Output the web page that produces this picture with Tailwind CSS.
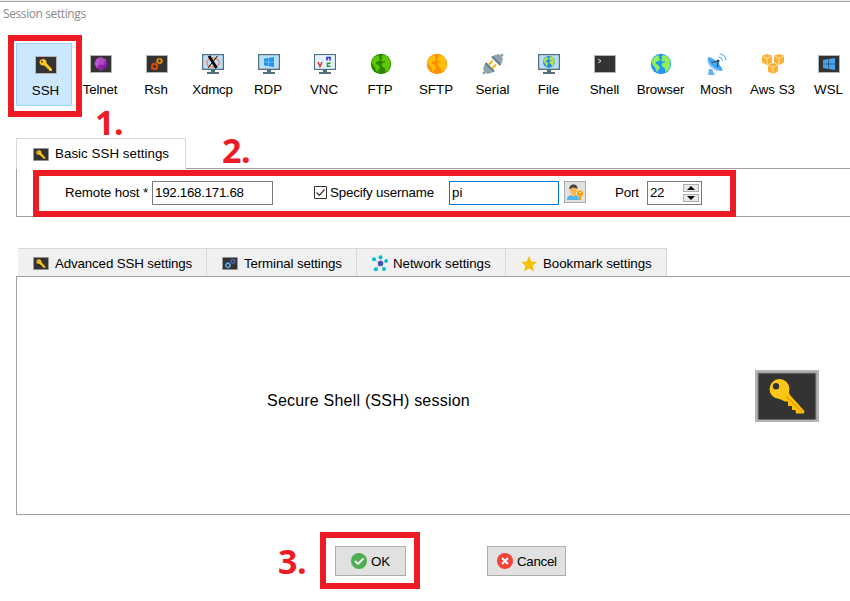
<!DOCTYPE html>
<html lang="en">
<head>
    <meta charset="UTF-8">
    <meta name="viewport" content="width=device-width, initial-scale=1.0">
    <title>Session settings</title>
    <script src="https://cdn.jsdelivr.net/npm/@tailwindcss/browser@4"></script>
</head>
<body class="relative w-[850px] h-[601px] overflow-hidden bg-white flex flex-col text-black font-['Liberation_Sans',Arial,sans-serif] text-[13.33px] leading-4 whitespace-nowrap">

<!-- Shared icons -->
<svg class="hidden">
    <symbol id="frame" viewBox="0 0 22 18">
        <path fill="#b4b4b4" d="M0 0h22v18H0z"/>
        <path fill="#333" d="M1 1h20v16H1z"/>
    </symbol>
    <symbol id="key" viewBox="0 0 64 52">
        <path fill="#b4b4b4" d="M0 0h64v52H0z"/>
        <path fill="#8c8c8c" d="M2.500 2.500h59v47h-59z"/>
        <path fill="#333" d="M3.500 3.500h57v46h-57z"/>
        <path fill="#ffc107" d="M33 20.500l2 4.500 14 15.500c.6 1 .5 2-.5 3H41l-.5-3.500h-3.500v-4h-4v-4.500h-3L24.500 29z"/>
        <path fill="#ffc61a" fill-rule="evenodd" d="M24.500 9a10 10 0 1 1 0 20 10 10 0 0 1 0-20zm-3.500 4a3.200 3.200 0 1 0 0 6.400 3.200 3.200 0 0 0 0-6.400z"/>
        <path fill="none" stroke="#e0a200" stroke-width="1.300" d="M31.500 26.500l16 16"/>
    </symbol>
    <symbol id="smallkey" viewBox="0 0 22 18">
        <path fill="#b4b4b4" d="M0 0h22v18H0z"/>
        <path fill="#333" d="M1 1h20v16H1z"/>
        <path fill="#ffc61a" fill-rule="evenodd" d="M8 3c2.500 0 4 2 3.600 4.200L17 13v2h-2.500l-.7-1.500-1.300-.5-.6-1.500-1.300-.5L9 9.300C6.500 10 4.500 8.500 4.500 6.300 4.500 4.500 6 3 8 3zM7 4.800a.9.900 0 1 0 0 1.800.9.900 0 0 0 0-1.800z"/>
    </symbol>
    <symbol id="monitor" viewBox="0 0 22 20">
        <path fill="#546e7a" d="M0 0h22v16H0zM9 16h4v2h4v2H5v-2h4z"/>
        <path fill="#bbdefb" d="M1.200 1.200h19.600v13.500H1.200z"/>
    </symbol>
    <symbol id="win" viewBox="0 0 12 12">
        <path d="M0 1.900l5.300-.8v4.600H0zM5.900 1L12 0v5.700H5.900zM0 6.300h5.300v4.600L0 10.100zM5.900 6.300H12V12l-6.100-1z"/>
    </symbol>
    <symbol id="land" viewBox="0 0 20 20">
        <path d="M3 3.500L7 1l1.500 1.500L7.500 4l1.500 1-1 2-2.500.5-1 2 2.500 1.500 2 2-1 2.500-1.500 1L7 18l-1.500-.5L4 13.500 2 11 .5 9 1 6.500zM10.500 3L12.500.8l4 1.700L19 6.500l.5 4-1 4-3 3.300-1.500-.3.300-3-2-1-1.800-2.500 1-2 2.500-.7-.5-1.300-2.500.5-1-2 1.500-1z"/>
    </symbol>
    <symbol id="cog" viewBox="0 0 10 10">
        <circle cx="5" cy="5" r="3" fill="none" stroke="currentColor" stroke-width="1.900"/>
        <circle cx="5" cy="5" r="4.300" fill="none" stroke="currentColor" stroke-width="1.400" stroke-dasharray="2 1.377"/>
    </symbol>
    <symbol id="cube" viewBox="0 0 10 11">
        <path fill="#fbb034" d="M5 0l5 1.800v6.700L5 11 0 8.500V1.800z"/>
        <path fill="none" stroke="#fff3dc" stroke-width=".7" d="M.5 2.500L5 4.300l4.500-1.800M5 4.300v6"/>
    </symbol>
</svg>

<!-- Title -->
<div class="h-[43px] shrink-0 border-t border-[#eee]">
    <div class="border-t border-[#a0a0a0] pl-[3px] pt-[4px] font-['Open_Sans','Noto_Sans',sans-serif] text-[12px] tracking-[-0.4px] text-[#8c8c8c]">Session settings</div>
</div>

<!-- Session types -->
<div class="flex h-[64px] shrink-0 pl-[16px]">
    <div class="w-[56px] shrink-0 h-[63px] border border-[#99d1ff] bg-[#cce8ff] flex flex-col items-center pt-[12px] pl-[3px]">
        <svg class="w-[22px] h-[18px]"><use href="#smallkey"/></svg>
        <span class="mt-[9px]">SSH</span>
    </div>
    <div class="w-[56px] shrink-0 flex flex-col items-center pt-[10px]">
        <svg class="ml-[2px] w-[22px] h-[22px]" viewBox="0 -2 22 22"><use href="#frame" width="22" height="18"/><path fill="#8e24aa" d="M11 2l5 2.500 1.500 4.500-2 4-4.500 3-4.500-3L4.500 8.500 6.500 4z"/><path fill="#ba55d3" d="M11 2L6.500 4 4.500 8.500l2 4.500L9 9.500z"/><path fill="#ab47bc" d="M11 2l-2 7.500 4.500.5L16 4.500z"/><path fill="#7b1fa2" d="M13.500 10l4-1-2 4-4.500 3z"/></svg>
        <span class="mt-[7px] tracking-[-0.2px]">Telnet</span>
    </div>
    <div class="w-[56px] shrink-0 flex flex-col items-center pt-[10px]">
        <svg class="ml-[2px] w-[22px] h-[22px]" viewBox="0 -2 22 22"><use href="#frame" width="22" height="18"/><use href="#cog" x="4.500" y="7.500" width="8" height="8" class="text-[#e65100]"/><use href="#cog" x="10" y="2.500" width="7" height="7" class="text-[#fb9c00]"/></svg>
        <span class="mt-[7px]">Rsh</span>
    </div>
    <div class="w-[56px] shrink-0 flex flex-col items-center pt-[10px]">
        <svg class="ml-[2px] w-[22px] h-[22px]" viewBox="0 -1 22 22"><use href="#monitor" width="22" height="20"/><ellipse cx="11" cy="8.500" rx="6.300" ry="4.500" fill="none" stroke="#f08a5d" stroke-width="1.400"/><path stroke="#000" stroke-width="2.800" d="M7 2l7.500 12"/><path stroke="#000" stroke-width="1" d="M15.500 2L6 14"/></svg>
        <span class="mt-[7px] ml-px tracking-[-0.2px]">Xdmcp</span>
    </div>
    <div class="w-[56px] shrink-0 flex flex-col items-center pt-[10px]">
        <svg class="ml-[2px] w-[22px] h-[22px]" viewBox="0 -1 22 22"><use href="#monitor" width="22" height="20"/><use href="#win" x="6" y="3" width="10" height="10" fill="#1e96f3"/></svg>
        <span class="mt-[7px]">RDP</span>
    </div>
    <div class="w-[56px] shrink-0 flex flex-col items-center pt-[10px]">
        <svg class="ml-[2px] w-[22px] h-[22px]" viewBox="0 -1 22 22"><use href="#monitor" width="22" height="20"/><path fill="#e3f2fd" d="M1.200 1.200h19.600v13.500H1.200z"/><g fill="none" stroke-width="1.600"><path stroke="#e53935" d="M4 8l2 4.500L8 8"/><path stroke="#3030e0" d="M13 6.500v-3h3v3"/><path stroke="#2ca02c" d="M16.500 9.300h-3v3h3"/></g></svg>
        <span class="mt-[7px]">VNC</span>
    </div>
    <div class="w-[56px] shrink-0 flex flex-col items-center pt-[10px]">
        <svg class="ml-[2px] w-[22px] h-[22px]" viewBox="0 0 22 22"><circle cx="11" cy="11" r="10.200" fill="#2e8500"/><use href="#land" x="1" y="1" width="20" height="20" fill="#5bc800"/></svg>
        <span class="mt-[7px]">FTP</span>
    </div>
    <div class="w-[56px] shrink-0 flex flex-col items-center pt-[10px]">
        <svg class="ml-[2px] w-[22px] h-[22px]" viewBox="0 0 22 22"><circle cx="11" cy="11" r="10.200" fill="#ff8f00"/><use href="#land" x="1" y="1" width="20" height="20" fill="#ffc107"/></svg>
        <span class="mt-[7px]">SFTP</span>
    </div>
    <div class="w-[56px] shrink-0 flex flex-col items-center pt-[10px]">
        <svg class="ml-[2px] w-[22px] h-[22px]" viewBox="0 0 22 22"><g transform="rotate(-45 11 11)"><path stroke="#90a4ae" stroke-width="2.500" d="M-3 11h6M19 11h6"/><path fill="#90a4ae" d="M6.500 5.500v11H4L0 14V8l4-2.500zM15.500 5.500v11H18l4-2.500V8l-4-2.500z"/><path fill="#607d8b" d="M5.500 5h2v12h-2zM14.500 5h2v12h-2z"/><path stroke="#ffb300" stroke-width="2" d="M7.500 8.500h5.500M7.500 13.500h5.500"/></g></svg>
        <span class="mt-[7px] ml-px">Serial</span>
    </div>
    <div class="w-[56px] shrink-0 flex flex-col items-center pt-[10px]">
        <svg class="ml-[2px] w-[22px] h-[22px]" viewBox="0 -1 22 22"><use href="#monitor" width="22" height="20"/><circle cx="11" cy="7.800" r="6" fill="#1e88e5"/><use href="#land" x="5" y="1.800" width="12" height="12" fill="#b2e04a"/></svg>
        <span class="mt-[7px] ml-px">File</span>
    </div>
    <div class="w-[56px] shrink-0 flex flex-col items-center pt-[10px]">
        <svg class="ml-[2px] w-[22px] h-[22px]" viewBox="0 -2 22 22"><use href="#frame" width="22" height="18"/><path fill="none" stroke="#ddd" d="M4 4l3 2-3 2"/></svg>
        <span class="mt-[7px] ml-px">Shell</span>
    </div>
    <div class="w-[56px] shrink-0 flex flex-col items-center pt-[10px]">
        <svg class="ml-[2px] w-[22px] h-[22px]" viewBox="0 0 22 22"><circle cx="11" cy="11" r="10.200" fill="#2196f3"/><use href="#land" x="1" y="1" width="20" height="20" fill="#8ff05a"/></svg>
        <span class="mt-[7px] ml-px tracking-[-0.2px]">Browser</span>
    </div>
    <div class="w-[56px] shrink-0 flex flex-col items-center pt-[10px]">
        <svg class="ml-[2px] w-[22px] h-[22px]" viewBox="0 0 22 22"><path fill="#64b5f6" d="M3 16h3l3 6H2z"/><path fill="#90caf9" d="M2 4.500c3-1 14 9 14.500 13C10 20-1 13 2 4.500z"/><path fill="#42a5f5" d="M2 4.500C5 3 16 12 16.500 17.500 11 18 1 10 2 4.500z"/><path fill="none" stroke="#37474f" stroke-width="1.200" d="M5.500 9.500l6.500-1.500-.5 6"/><circle cx="12" cy="8" r="1.600" fill="#1a4c8c"/><path fill="none" stroke="#64b5f6" stroke-width="1.100" d="M12.500 4c2.200.2 3.800 1.800 4 4M13.500 1c4 .3 6.200 3 6.500 6.500"/></svg>
        <span class="mt-[7px] tracking-[-0.2px]">Mosh</span>
    </div>
    <div class="w-[56px] shrink-0 flex flex-col items-center pt-[10px]">
        <svg class="ml-[2px] w-[24px] h-[22px]" viewBox="0 0 24 22"><use href="#cube" x="1" y="1" width="10" height="11"/><use href="#cube" x="13" y="1" width="10" height="11"/><use href="#cube" x="7" y="10" width="10" height="11"/></svg>
        <span class="mt-[7px] ml-px">Aws S3</span>
    </div>
    <div class="w-[56px] shrink-0 flex flex-col items-center pt-[10px]">
        <svg class="ml-[2px] w-[22px] h-[22px]" viewBox="0 -2 22 22"><use href="#frame" width="22" height="18"/><use href="#win" x="5" y="3" width="12" height="12" fill="#42a5f5"/></svg>
        <span class="mt-[7px] ml-px">WSL</span>
    </div>
</div>

<!-- Basic settings -->
<div class="mt-[31px] flex shrink-0 h-[30px]">
    <div class="relative ml-[16px] w-[170px] h-[31px] border border-b-0 border-[#d9d9d9] bg-white flex items-center gap-[6px] pl-[16px]">
        <svg class="w-[16px] h-[13px]"><use href="#smallkey"/></svg>
        <span class="tracking-[0.04px]">Basic SSH settings</span>
    </div>
</div>
<div class="ml-[16px] h-[49px] shrink-0 border border-r-0 border-[#a0a0a0] flex items-start pt-[12px] pl-[48px]">
    <label class="w-[87px] pt-[4px] tracking-[-0.1px]">Remote host *</label>
    <div class="w-[121px] h-[24px] border border-[#7a7a7a] pl-[2px] pt-[3px] tracking-[-0.28px]">192.168.171.68</div>
    <svg class="ml-[41px] mt-[5px] w-[13px] h-[13px]" viewBox="0 0 13 13"><path fill="#fff" stroke="#333" d="M.5.5h12v12H.5z"/><path fill="none" stroke="#333" stroke-width="1.200" d="M2.500 6.500l2.800 2.800 5.200-5.800"/></svg>
    <label class="ml-[3px] w-[119px] pt-[4px] tracking-[-0.17px]">Specify username</label>
    <div class="w-[110px] h-[24px] border border-[#0078d7] pl-[2px] pt-[3px]">pi</div>
    <div class="ml-[5px] w-[22px] h-[22px] border border-[#adadad] bg-[#e1e1e1] flex items-center justify-center">
        <svg class="w-[18px] h-[18px]" viewBox="0 0 18 18"><path fill="#4fb3f0" d="M1 17c0-3 1.500-4.500 5-5h3c3 .5 4 2 4 5z"/><path fill="#ffb74d" d="M5.500 10h4v2.500l-2 1.500-2-1.500z"/><ellipse cx="7.500" cy="6.500" rx="3.500" ry="4.500" fill="#ffb74d"/><path fill="#424242" d="M3.500 6.500C3 3 5 1.500 7.500 1.500S12 3 11.500 6.500L10.500 5l-4-.5z"/><circle cx="14" cy="10.500" r="3" fill="#ffa000"/><path fill="#ffa000" d="M13 12h2v5h-2z"/><path fill="#fff" d="M13 9h2v1h-2z"/></svg>
    </div>
    <label class="ml-[29px] w-[32px] pt-[4px] tracking-[-0.2px]">Port</label>
    <div class="w-[55px] h-[24px] border border-[#7a7a7a] pl-[2px] pr-[2px] flex justify-between">
        <span class="pt-[3px] tracking-[-0.4px]">22</span>
        <div class="flex flex-col gap-[2px] pt-[2px]">
            <div class="w-[16px] h-[8px] border border-[#adadad] bg-[#e9e9e9] flex items-center justify-center"><svg class="w-[8px] h-[4px]" viewBox="0 0 8 4"><path d="M4 0l4 4H0z"/></svg></div>
            <div class="w-[16px] h-[8px] border border-[#adadad] bg-[#e9e9e9] flex items-center justify-center"><svg class="w-[8px] h-[4px]" viewBox="0 0 8 4"><path d="M0 0h8L4 4z"/></svg></div>
        </div>
    </div>
</div>

<!-- Other settings -->
<div class="mt-[31px] ml-[18px] flex shrink-0 h-[28px]">
    <div class="w-[189px] border-t border-r border-[#d9d9d9] bg-[#f0f0f0] flex items-center gap-[6px] pl-[15px] pt-[2px]">
        <svg class="w-[16px] h-[13px]"><use href="#smallkey"/></svg>
        <span class="tracking-[-0.14px]">Advanced SSH settings</span>
    </div>
    <div class="w-[150px] border-t border-r border-[#d9d9d9] bg-[#f0f0f0] flex items-center gap-[6px] pl-[15px] pt-[2px]">
        <svg class="w-[16px] h-[13px]" viewBox="0 0 22 18"><use href="#frame" width="22" height="18"/><use href="#cog" x="3.500" y="7" width="9" height="9" class="text-[#64b5f6]"/><use href="#cog" x="11" y="2" width="8" height="8" class="text-[#5c6bc0]"/></svg>
        <span class="tracking-[-0.13px]">Terminal settings</span>
    </div>
    <div class="w-[149px] border-t border-r border-[#d9d9d9] bg-[#f0f0f0] flex items-center gap-[5px] pl-[15px] pt-[2px]">
        <svg class="w-[16px] h-[17px]" viewBox="0 0 16 17"><path fill="none" stroke="#b0bec5" d="M8.500 2v6M2 4.500l6.500 4L14.500 6M3.500 15l5-6.500 4 6"/><g fill="#00bcd4"><circle cx="8.500" cy="2.200" r="2"/><circle cx="2" cy="4.200" r="2"/><circle cx="14.200" cy="6" r="1.900"/><circle cx="3.800" cy="14.200" r="2"/><circle cx="12" cy="14" r="2"/></g><circle cx="8.500" cy="8.500" r="2.700" fill="#3f51b5"/></svg>
        <span class="tracking-[-0.06px]">Network settings</span>
    </div>
    <div class="w-[161px] border-t border-r border-[#d9d9d9] bg-[#f0f0f0] flex items-center gap-[6px] pl-[15px] pt-[2px]">
        <svg class="w-[16px] h-[16px]" viewBox="0 0 16 16"><path fill="#f4c20d" d="M8 0l2.300 5.400 5.700.5-4.300 3.800L13 15.500 8 12.400l-5 3.100 1.300-5.800L0 5.900l5.700-.5z"/></svg>
        <span class="tracking-[-0.06px]">Bookmark settings</span>
    </div>
</div>
<div class="ml-[16px] h-[239px] shrink-0 border border-r-0 border-[#a0a0a0] flex items-center pl-[250px]">
    <div class="w-[488px] pt-[10px] text-[16px] leading-5 tracking-[0.21px]">Secure Shell (SSH) session</div>
    <svg class="w-[64px] h-[52px]"><use href="#key"/></svg>
</div>

<!-- Buttons -->
<div class="flex mt-[31px] pl-[335px] gap-[81px]">
    <button class="w-[71px] h-[30px] border border-[#adadad] bg-[#e1e1e1] flex items-center pl-[15px] gap-[4px]">
        <svg class="w-[16px] h-[16px]" viewBox="0 0 16 16"><circle cx="8" cy="8" r="8" fill="#4caf50"/><path fill="none" stroke="#fff" stroke-width="1.800" d="M4 8l3 3 5.500-5.500"/></svg>
        <span class="pt-px">OK</span>
    </button>
    <button class="w-[79px] h-[30px] border border-[#adadad] bg-[#e1e1e1] flex items-center pl-[9px] gap-[4px]">
        <svg class="w-[16px] h-[16px]" viewBox="0 0 16 16"><circle cx="8" cy="8" r="8" fill="#f44336"/><path stroke="#fff" stroke-width="2" d="M5 5l6 6M11 5l-6 6"/></svg>
        <span class="pt-px tracking-[-0.3px]">Cancel</span>
    </button>
</div>

<!-- Step markers -->
<div class="absolute left-[8px] top-[35px] w-[74px] h-[82px] border-6 border-[#ed1c24]"></div>
<div class="absolute left-[33px] top-[170px] w-[703px] h-[47px] border-6 border-[#ed1c24]"></div>
<div class="absolute left-[320px] top-[532px] w-[100px] h-[57px] border-6 border-[#ed1c24]"></div>
<div class="absolute left-[95px] top-[104px] font-['Open_Sans',sans-serif] font-bold text-[34px] leading-[36px] tracking-[-0.5px] text-[#ed1c24]">1.</div>
<div class="absolute left-[222px] top-[132px] font-['Open_Sans',sans-serif] font-bold text-[34px] leading-[36px] tracking-[-0.5px] text-[#ed1c24]">2.</div>
<div class="absolute left-[278px] top-[543px] font-['Open_Sans',sans-serif] font-bold text-[34px] leading-[36px] tracking-[-0.5px] text-[#ed1c24]">3.</div>

</body>
</html>
